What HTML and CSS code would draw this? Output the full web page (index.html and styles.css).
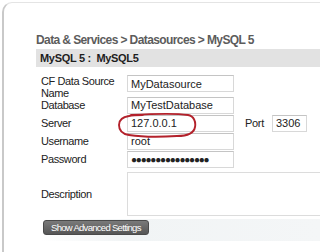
FILE: index.html
```html
<!doctype html>
<html lang="en">
    <head>
        <meta charset="UTF-8" />
        <title>Data &amp; Services - Datasources</title>
        <link rel="stylesheet" href="styles.css">
    </head>
    <body>
        <div class="panel">
            <h1 class="crumbs">Data &amp; Services &gt; Datasources &gt; MySQL 5</h1>

            <div class="bar">MySQL 5 :&nbsp; MySQL5</div>

            <form class="ds-form">
                <div class="row row-name">
                    <label>CF Data Source<br>Name</label>
                    <input class="field" type="text" value="MyDatasource">
                </div>
                <div class="row">
                    <label>Database</label>
                    <input class="field" type="text" value="MyTestDatabase">
                </div>
                <div class="row">
                    <label>Server</label>
                    <div class="server">
                        <input class="field" type="text" value="127.0.0.1">
                        <!-- hand drawn marker round the server address -->
                        <svg class="scribble" width="82" height="28" viewBox="0 0 82 28">
                            <path d="M14 3 C32 2 58 1 71 3 C77 4 79 10 78 15 C77 21 71 24 60 24 C45 25 25 25 12 23 C5 22 2 18 2 13 C2 8 5 5 12 4 C16 3 21 3 26 3"
                                  fill="none" stroke="#b3212b" stroke-width="1.9" stroke-linecap="round" />
                        </svg>
                    </div>
                    <span class="port-label">Port</span>
                    <input class="field port" type="text" value="3306">
                </div>
                <div class="row">
                    <label>Username</label>
                    <input class="field" type="text" value="root">
                </div>
                <div class="row">
                    <label>Password</label>
                    <input class="field pass" type="text" value="●●●●●●●●●●●●●●●●">
                </div>
                <div class="row row-desc">
                    <label>Description</label>
                    <textarea class="desc"></textarea>
                </div>
                <div class="actions">
                    <button type="button" class="button">Show Advanced Settings</button>
                </div>
            </form>
        </div>
    </body>
</html>
```

FILE: styles.css
```css
* {
    margin: 0;
    padding: 0;
    box-sizing: border-box;
}
body {
    font-family: "Liberation Sans", Arial, sans-serif;
    background-color: #ffffff;
    color: #222222;
    font-size: 11px;
    overflow: hidden;
}
.panel {
    margin: 2px 0 0 2px;
    height: 260px;
    border-left: 2px solid #c9c9c9;
    border-top: 1px solid #e4e4e4;
    border-top-left-radius: 10px;
    padding: 29px 0 0 32px;
}
.crumbs {
    font-size: 12px;
    font-weight: bold;
    letter-spacing: -0.6px;
    color: #5c5c5c;
    line-height: 16px;
    height: 17px;
}
.bar {
    background-color: #e2e2e2;
    height: 18px;
    line-height: 18px;
    padding-left: 4px;
    font-weight: bold;
    color: #1e1e1e;
    font-size: 11px;
    letter-spacing: -0.3px;
}
.ds-form {
    padding: 8px 0 0 5px;
}
.row {
    display: flex;
    align-items: center;
    height: 18px;
}
.row label {
    width: 86px;
    flex: none;
    line-height: 12px;
    letter-spacing: -0.4px;
}
.row-name {
    height: 20px;
    align-items: flex-start;
    margin-bottom: 1px;
}
.field {
    width: 107px;
    height: 17px;
    border: 1px solid #d8d8d8;
    border-top-color: #c4c4c4;
    padding: 0 3px;
    font-family: "Liberation Sans", Arial, sans-serif;
    font-size: 11px;
    color: #222222;
    background: #ffffff;
}
.pass {
    font-size: 10px;
    letter-spacing: -1.2px;
}
.server {
    position: relative;
}
.scribble {
    position: absolute;
    left: -10px;
    top: -3px;
}
.port-label {
    margin: 0 0 0 11px;
    width: 27px;
    letter-spacing: -0.3px;
}
.port {
    width: 35px;
}
.row-desc {
    height: 45px;
    margin-top: 3px;
}
.desc {
    width: 200px;
    height: 44px;
    border: 1px solid #dcdcdc;
    border-right: none;
    resize: none;
}
.actions {
    margin: 3px 0 0 0;
    padding: 1px 0 6px 2px;
    background: linear-gradient(90deg, #ffffff 0%, #f1f4f5 30%, #f4f6f7 100%);
}
.button {
    background: linear-gradient(#7a7a7a, #565656);
    color: #ffffff;
    border: 1px solid #4a4a4a;
    border-radius: 3px;
    height: 15px;
    padding: 0 7px;
    font-family: "Liberation Sans", Arial, sans-serif;
    font-size: 9.5px;
    letter-spacing: -0.7px;
    cursor: pointer;
}
```
